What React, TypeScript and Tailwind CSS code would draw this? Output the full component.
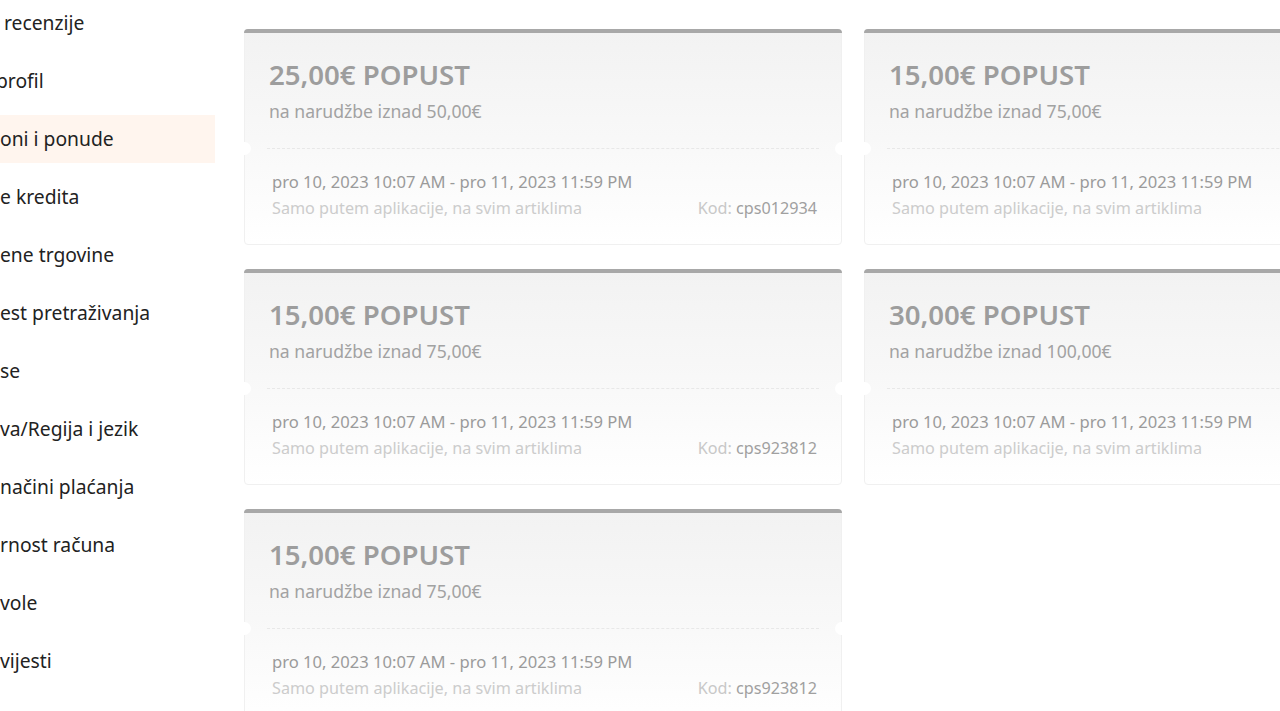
import React from 'react';

const menu = [
    'recenzije',
    'profil',
    'oni i ponude',
    'e kredita',
    'ene trgovine',
    'est pretraživanja',
    'se',
    'va/Regija i jezik',
    'načini plaćanja',
    'rnost računa',
    'vole',
    'vijesti',
];

const coupons = [
    { amount: '25,00€', min: '50,00€', code: 'cps012934' },
    { amount: '15,00€', min: '75,00€', code: 'cps012935' },
    { amount: '15,00€', min: '75,00€', code: 'cps923812' },
    { amount: '30,00€', min: '100,00€', code: 'cps923813' },
    { amount: '15,00€', min: '75,00€', code: 'cps923812' },
];

function Coupon({ amount, min, code }: { amount: string; min: string; code: string }) {
    return (
        <div className="relative flex flex-col rounded-[4px] border border-[#f0f0f0] bg-gradient-to-b from-[#f2f2f2] via-[#f8f8f8] to-white">
            <div className="h-[4px] -mx-px -mt-px rounded-t-[4px] bg-[#a8a8a8]" />
            <div className="h-[115px] px-[24px] pt-[23px]">
                <div className="text-[27.6px] font-semibold leading-[36px] text-[#9d9d9d]">{amount} POPUST</div>
                <div className="mt-[7px] text-[17.6px] leading-[24px] text-[#a2a2a2]">na narudžbe iznad {min}</div>
            </div>
            <div className="relative mx-[22px] border-t border-dashed border-[#e8e8e8]">
                <span className="absolute -left-[29px] -top-[7px] h-[13px] w-[13px] rounded-full bg-white" />
                <span className="absolute -right-[29px] -top-[7px] h-[13px] w-[13px] rounded-full bg-white" />
            </div>
            <div className="h-[95px] pl-[27px] pr-[24px] pt-[21px]">
                <div className="text-[16.6px] leading-[24px] text-[#9a9a9a]">pro 10, 2023 10:07 AM - pro 11, 2023 11:59 PM</div>
                <div className="mt-[2px] flex items-center justify-between text-[16.2px] leading-[24px]">
                    <span className="text-[#cccccc]">Samo putem aplikacije, na svim artiklima</span>
                    <span className="text-[#c8c8c8]">
                        Kod: <span className="text-[#a0a0a0]">{code}</span>
                    </span>
                </div>
            </div>
        </div>
    );
}

export default function App() {
    return (
        <div
            className="flex h-[711px] w-[1280px] overflow-hidden bg-white"
            style={{ fontFamily: '"Noto Sans", "Open Sans", sans-serif' }}
        >
            {/* Sidebar */}
            <div className="-mt-px flex w-[215px] shrink-0 flex-col gap-[10px]">
                {menu.map((item, i) => (
                    <div
                        key={item}
                        className={`flex h-[48px] items-center whitespace-nowrap text-[19.3px] text-[#222222] ${i === 2 ? 'bg-[#fff5ee]' : ''} ${i === 0 ? 'pl-[4px]' : ''}`}
                    >
                        {i === 1 ? <span className="-ml-[4px]">profil</span> : item}
                    </div>
                ))}
            </div>

            {/* Coupons */}
            <div className="ml-[29px] pt-[29px]">
                <div className="grid grid-cols-[598px_598px] gap-x-[22px] gap-y-[24px]">
                    {coupons.map((c, i) => (
                        <Coupon key={i} {...c} />
                    ))}
                </div>
            </div>
        </div>
    );
}
